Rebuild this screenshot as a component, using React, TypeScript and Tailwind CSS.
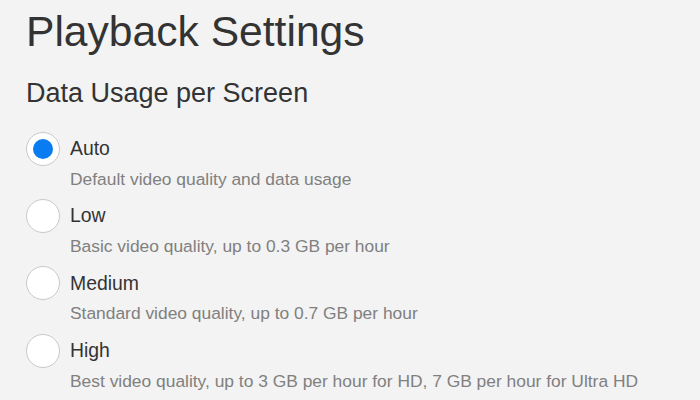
import React, { useState } from 'react';

const options = [
  { id: 'auto', label: 'Auto', desc: 'Default video quality and data usage' },
  { id: 'low', label: 'Low', desc: 'Basic video quality, up to 0.3 GB per hour' },
  { id: 'medium', label: 'Medium', desc: 'Standard video quality, up to 0.7 GB per hour' },
  { id: 'high', label: 'High', desc: 'Best video quality, up to 3 GB per hour for HD, 7 GB per hour for Ultra HD' },
];

const App: React.FC = () => {
  const [selected, setSelected] = useState('auto');

  return (
    <div className="w-[700px] h-[400px] overflow-hidden bg-[#f3f3f3] pl-[26px] pt-[10px] font-['Liberation_Sans',Arial,sans-serif] text-[#333]">
      <h1 className="text-[42.6px] leading-none">Playback Settings</h1>
      <h2 className="mt-[27px] text-[27px] leading-none">Data Usage per Screen</h2>

      <div className="mt-[25px] flex flex-col">
        {options.map((opt) => {
          const checked = selected === opt.id;
          return (
            <div key={opt.id} className="mb-[11px] cursor-pointer" onClick={() => setSelected(opt.id)}>
              <div className="flex h-[34px] items-center">
                <span className="flex h-[34px] w-[34px] items-center justify-center rounded-full border border-[#c9c9c9] bg-white">
                  {checked && <span className="h-[20px] w-[20px] rounded-full bg-[#0a7cf2]" />}
                </span>
                <span className="ml-[10px] text-[19.4px] leading-none">{opt.label}</span>
              </div>
              <p className="ml-[44px] mt-[5px] text-[17.4px] leading-none text-[#808080]">{opt.desc}</p>
            </div>
          );
        })}
      </div>
    </div>
  );
};

export default App;
